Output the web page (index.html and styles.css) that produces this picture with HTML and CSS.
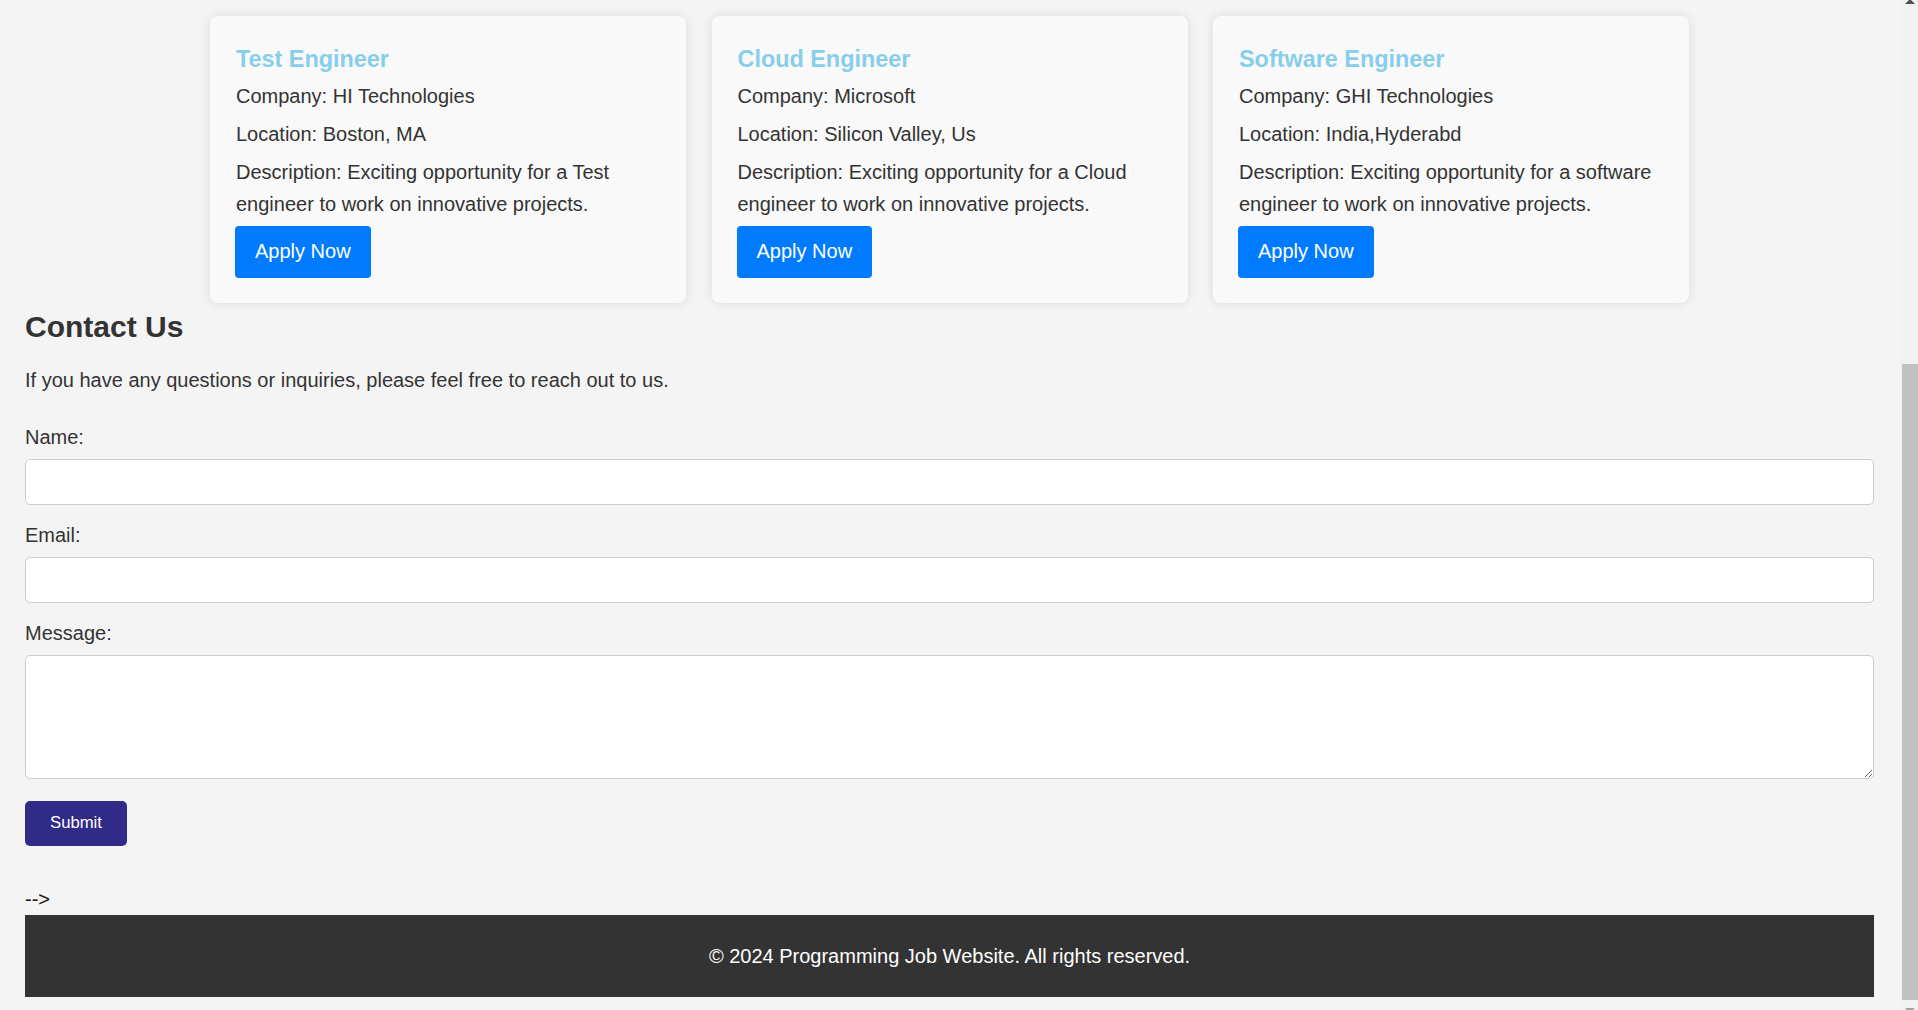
FILE: index.html
```html
<!DOCTYPE html>
<html lang="en">
<head>
<meta charset="utf-8">
<title>Programming Job Website</title>
<link rel="stylesheet" href="styles.css">
</head>
<body>
<div class="page">
  <section class="jobs-section" id="jobs">
    <div class="jobs">
      <article class="job-card">
        <h3 class="job-title">Test Engineer</h3>
        <p class="job-line">Company: HI Technologies</p>
        <p class="job-line">Location: Boston, MA</p>
        <p class="job-line">Description: Exciting opportunity for a Test engineer to work on innovative projects.</p>
        <button class="apply-btn" type="button">Apply Now</button>
      </article>
      <article class="job-card">
        <h3 class="job-title">Cloud Engineer</h3>
        <p class="job-line">Company: Microsoft</p>
        <p class="job-line">Location: Silicon Valley, Us</p>
        <p class="job-line">Description: Exciting opportunity for a Cloud engineer to work on innovative projects.</p>
        <button class="apply-btn" type="button">Apply Now</button>
      </article>
      <article class="job-card">
        <h3 class="job-title">Software Engineer</h3>
        <p class="job-line">Company: GHI Technologies</p>
        <p class="job-line">Location: India,Hyderabd</p>
        <p class="job-line">Description: Exciting opportunity for a software engineer to work on innovative projects.</p>
        <button class="apply-btn" type="button">Apply Now</button>
      </article>
    </div>
  </section>

  <section class="contact" id="contact">
    <h2 class="contact-title">Contact Us</h2>
    <p class="contact-intro">If you have any questions or inquiries, please feel free to reach out to us.</p>
    <form class="contact-form">
      <label class="field-label" for="name">Name:</label>
      <input class="field-input" type="text" id="name">
      <label class="field-label" for="email">Email:</label>
      <input class="field-input" type="email" id="email">
      <label class="field-label" for="message">Message:</label>
      <textarea class="field-area" id="message"></textarea>
      <button class="submit-btn" type="button">Submit</button>
    </form>
  </section>

  <div class="stray">--&gt;</div>

  <footer class="site-footer">
    <p class="footer-text">&copy; 2024 Programming Job Website. All rights reserved.</p>
  </footer>
</div>
<div class="scrollbar" aria-hidden="true"><div class="scrollbar-thumb"></div></div>
</body>
</html>
```

FILE: styles.css
```css
html, body {
  margin: 0;
}

body {
  background: #f4f4f4;
  color: #333;
  font-family: "Liberation Sans", Arial, sans-serif;
  font-size: 20px;
  line-height: 32px;
  overflow: hidden;
}

.page {
  margin-right: 17px;
  padding: 16px 27px 13px 25px;
}

/* job cards */
.jobs {
  display: flex;
  justify-content: center;
  gap: 25.5px;
}

.job-card {
  width: 476px;
  box-sizing: border-box;
  padding: 25px 26px;
  background: #f9f9f9;
  border-radius: 8px;
  box-shadow: 0 0 12px rgba(0, 0, 0, 0.1);
}

.job-title {
  margin: 0 0 1.3px;
  font-size: 23.4px;
  line-height: 37.4px;
  color: #87ceeb;
}

.job-line {
  margin: 0 0 6px;
  line-height: 32px;
}

.apply-btn {
  display: block;
  margin: 0 0 0 -1px;
  padding: 14.5px 20px;
  border: none;
  border-radius: 4px;
  background: #007bff;
  color: #fff;
  font-family: inherit;
  font-size: 20px;
  line-height: 23px;
}

/* contact */
.contact-title {
  margin: 0;
  font-size: 30px;
  line-height: 48px;
}

.contact-intro {
  margin: 13px 0 25px;
}

.contact-form {
  display: flex;
  flex-direction: column;
  align-items: stretch;
}

.field-label {
  display: block;
  margin-bottom: 6px;
}

.field-input,
.field-area {
  display: block;
  width: 100%;
  box-sizing: border-box;
  margin: 0 0 14px;
  padding: 12.5px;
  border: 1px solid #ccc;
  border-radius: 5px;
  background: #fff;
  font-family: inherit;
  font-size: 16.7px;
}

.field-input {
  height: 46px;
}

.field-area {
  height: 124px;
  margin-bottom: 22px;
}

.submit-btn {
  align-self: flex-start;
  height: 45px;
  padding: 0 25px;
  border: none;
  border-radius: 5px;
  background: #302b87;
  color: #fff;
  font-family: inherit;
  font-size: 16.7px;
}

.stray {
  margin-top: 37.5px;
  color: #1a1a1a;
}

/* footer */
.site-footer {
  background: #333;
  color: #fff;
  text-align: center;
  padding: 25px 0;
}

.footer-text {
  margin: 0;
}

/* browser scrollbar look-alike */
.scrollbar {
  position: fixed;
  top: 0;
  right: 0;
  bottom: 0;
  width: 17px;
  background: #f1f1f1;
}

.scrollbar::before,
.scrollbar::after {
  content: "";
  position: absolute;
  left: 4px;
  border-left: 5px solid transparent;
  border-right: 5px solid transparent;
}

.scrollbar::before {
  top: -1px;
  border-bottom: 5px solid #505050;
}

.scrollbar::after {
  bottom: -3px;
  border-top: 5px solid #a3a3a3;
}

.scrollbar-thumb {
  position: absolute;
  top: 364px;
  bottom: 10px;
  left: 1px;
  right: 0;
  background: #c1c1c1;
}
```
